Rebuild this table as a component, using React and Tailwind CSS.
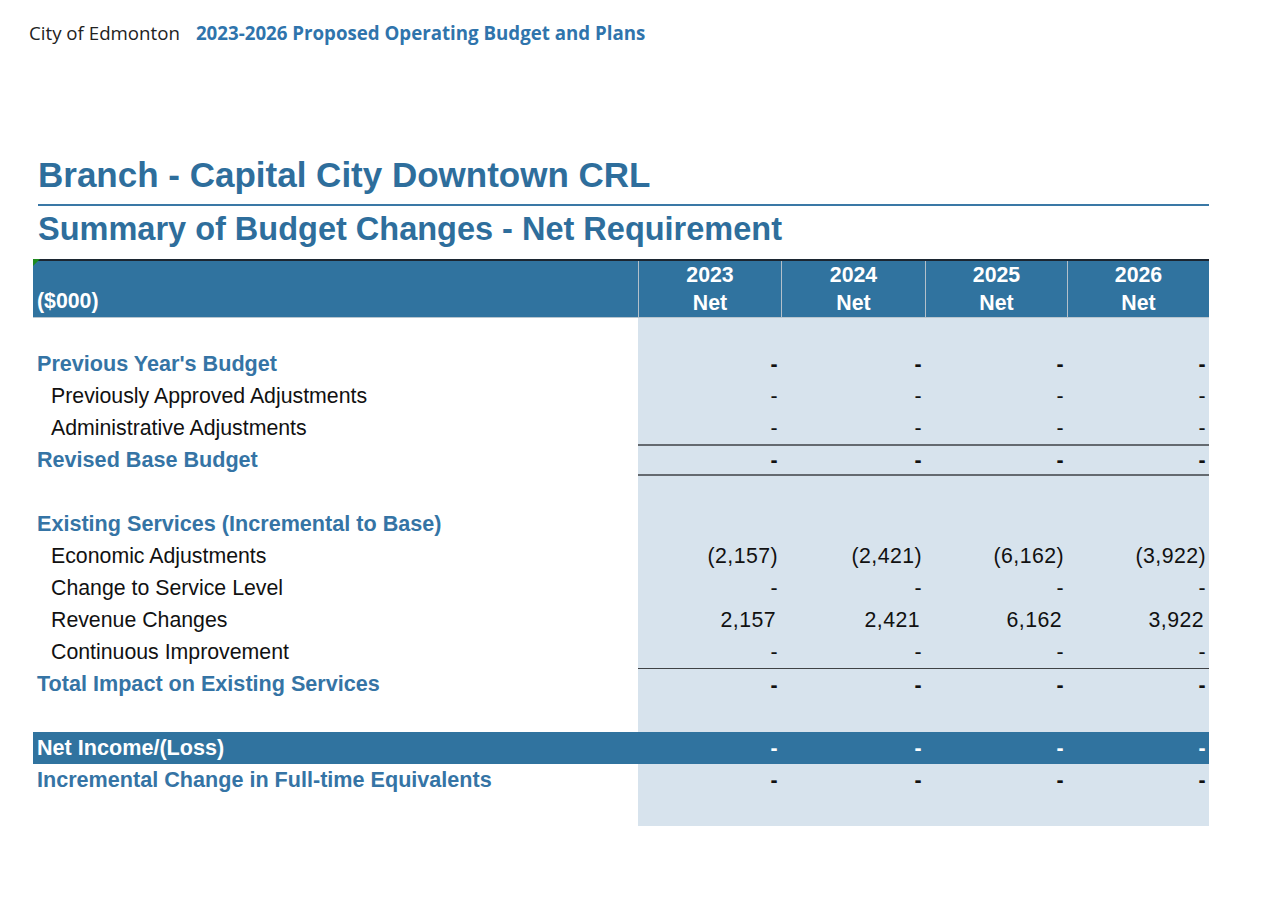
import React from "react";

const years = ["2023", "2024", "2025", "2026"];

// rows of the summary table
const rows = [
  { type: "spacer", h: "h-[30px]" },
  { label: "Previous Year's Budget", bold: true, vals: ["-", "-", "-", "-"] },
  { label: "Previously Approved Adjustments", vals: ["-", "-", "-", "-"] },
  { label: "Administrative Adjustments", vals: ["-", "-", "-", "-"] },
  { label: "Revised Base Budget", bold: true, vals: ["-", "-", "-", "-"], lineTop: "thick", lineBottom: true },
  { type: "spacer", h: "h-[32px]" },
  { label: "Existing Services (Incremental to Base)", bold: true, vals: ["", "", "", ""] },
  { label: "Economic Adjustments", vals: ["(2,157)", "(2,421)", "(6,162)", "(3,922)"] },
  { label: "Change to Service Level", vals: ["-", "-", "-", "-"] },
  { label: "Revenue Changes", vals: ["2,157", "2,421", "6,162", "3,922"] },
  { label: "Continuous Improvement", vals: ["-", "-", "-", "-"] },
  { label: "Total Impact on Existing Services", bold: true, vals: ["-", "-", "-", "-"], lineTop: "thin" },
  { type: "spacer", h: "h-[32px]" },
  { label: "Net Income/(Loss)", total: true, vals: ["-", "-", "-", "-"] },
  { label: "Incremental Change in Full-time Equivalents", bold: true, vals: ["-", "-", "-", "-"] },
  { type: "spacer", h: "h-[30px]" },
];

const grid = "grid grid-cols-[605px_143px_144px_142px_142px]";

const Cell = ({ value, bold, total, lineTop, lineBottom }) => {
  const neg = value.startsWith("(");
  return (
    <div
      className={`h-[32px] flex items-center justify-end ${
        total ? "bg-[#30739f] text-white font-bold" : "bg-[#d7e3ed] text-[#111]"
      } ${bold ? "font-bold" : ""} ${
        lineTop === "thick" ? "border-t-2 border-[#646a70]" : ""
      } ${lineTop === "thin" ? "border-t-[1.5px] border-[#3f4245]" : ""} ${
        lineBottom ? "border-b-2 border-[#646a70]" : ""
      } ${neg || value === "-" ? "pr-[3px]" : "pr-[5px]"} tracking-[0.02em]`}
    >
      {value}
    </div>
  );
};

const App = () => {
  return (
    <div className="min-h-screen bg-white">
      {/* page header */}
      <div
        className="pt-[19px] pl-[29px] text-[18.7px] leading-[28px] flex gap-[16px]"
        style={{ fontFamily: '"Open Sans", sans-serif' }}
      >
        <span className="text-[#222]">City of Edmonton</span>
        <span className="font-bold text-[#2f74ac]">
          2023-2026 Proposed Operating Budget and Plans
        </span>
      </div>

      <div
        className="pl-[33px] w-[1209px]"
        style={{ fontFamily: '"Liberation Sans", Arial, sans-serif' }}
      >
        <h1 className="mt-[108px] ml-[5px] text-[35px] leading-[40px] font-bold text-[#2e6e9c]">
          Branch - Capital City Downtown CRL
        </h1>
        <div className="mt-[9px] ml-[5px] h-[2px] bg-[#3a78a6]" />
        <h2 className="mt-[4px] ml-[5px] text-[32.5px] leading-[38px] font-bold text-[#2e6e9c]">
          Summary of Budget Changes - Net Requirement
        </h2>

        {/* table */}
        <div className="mt-[11px] text-[21.3px] leading-[24px]">
          {/* header row */}
          <div className={`${grid} relative h-[59px] bg-[#30739f] border-t-2 border-[#1c2631] border-b border-b-[#b9c6cf] text-white font-bold`}>
            <div className="absolute left-0 -top-[2px] w-0 h-0 border-t-[7px] border-t-[#1f8a1f] border-r-[7px] border-r-transparent" />
            <div className="flex items-end pl-[4px] pb-[4px]">($000)</div>
            {years.map((y) => (
              <div
                key={y}
                className="flex flex-col items-center justify-center border-l border-[#b3c0ca] leading-[28px]"
              >
                <span>{y}</span>
                <span>Net</span>
              </div>
            ))}
          </div>

          {rows.map((r, i) =>
            r.type === "spacer" ? (
              <div key={i} className={grid}>
                <div className={r.h} />
                <div className="bg-[#d7e3ed] col-span-4" />
              </div>
            ) : (
              <div key={i} className={grid}>
                <div
                  className={`h-[32px] flex items-center ${
                    r.total
                      ? "bg-[#30739f] text-white font-bold pl-[4px] text-[21.6px]"
                      : r.bold
                      ? "text-[#3574a5] font-bold pl-[4px] text-[21.6px]"
                      : "text-[#111] pl-[18px]"
                  }`}
                >
                  {r.label}
                </div>
                {r.vals.map((v, j) => (
                  <Cell
                    key={j}
                    value={v}
                    bold={r.bold}
                    total={r.total}
                    lineTop={r.lineTop}
                    lineBottom={r.lineBottom}
                  />
                ))}
              </div>
            )
          )}
        </div>
      </div>
    </div>
  );
};

export default App;
